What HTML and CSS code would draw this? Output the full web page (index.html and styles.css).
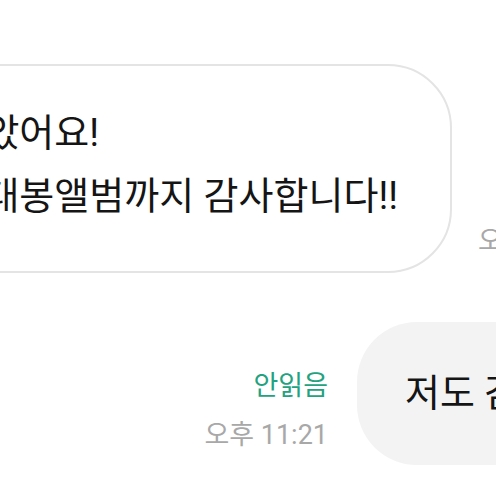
FILE: index.html
```html
<!DOCTYPE html>
<html lang="ko">
<head>
    <meta charset="UTF-8">
    <meta name="viewport" content="width=device-width, initial-scale=1.0">
    <title>Chat</title>
    <link rel="stylesheet" href="styles.css">
</head>
<body>
    <div class="chat">
        <div class="row in">
            <div class="bubble-wrap">
                <div class="bubble">잘 받았어요!<br>포카 대봉앨범까지 감사합니다!!</div>
            </div>
            <div class="meta">
                <div class="time">오후 11:20</div>
            </div>
        </div>
        <div class="row out">
            <div class="meta">
                <div class="unread">안읽음</div>
                <div class="time">오후 11:21</div>
            </div>
            <div class="bubble">저도 감사합니다!</div>
        </div>
    </div>
</body>
</html>
```

FILE: styles.css
```css
* {
    margin: 0;
    padding: 0;
    box-sizing: border-box;
}

:root {
    --text: #151515;
    --border: #e4e4e4;
    --grey: #f3f3f3;
    --time: #a8a8a8;
    --green: #22a27e;
}

body {
    width: 496px;
    height: 496px;
    overflow: hidden;
    background: #ffffff;
    color: var(--text);
    font-family: Roboto, "Noto Sans CJK KR", sans-serif;
}

.chat {
    display: flex;
    flex-direction: column;
    gap: 49px;
    padding-top: 64px;
}

.row {
    display: flex;
    align-items: flex-end;
}

.bubble {
    flex-shrink: 0;
    white-space: nowrap;
    font-size: 38px;
    line-height: 63px;
}

.in .bubble-wrap {
    flex: 0 0 452px;
    min-width: 0;
    display: flex;
    justify-content: flex-end;
}

.in .bubble {
    background: #ffffff;
    border: 2px solid var(--border);
    border-radius: 64px;
    padding: 36px 52px 43px 48px;
}

.in .meta {
    flex-shrink: 0;
    margin-left: 26px;
    margin-bottom: 16px;
}

.out .meta {
    flex: 0 0 328px;
    display: flex;
    flex-direction: column;
    align-items: flex-end;
    gap: 17px;
    margin-bottom: 14px;
}

.out .bubble {
    background: var(--grey);
    margin-left: 29px;
    padding: 40px 48px;
    border-radius: 60px 0 0 60px;
}

.meta {
    font-size: 27px;
    line-height: 32px;
    white-space: nowrap;
}

.time {
    color: var(--time);
}

.unread {
    color: var(--green);
}
```
